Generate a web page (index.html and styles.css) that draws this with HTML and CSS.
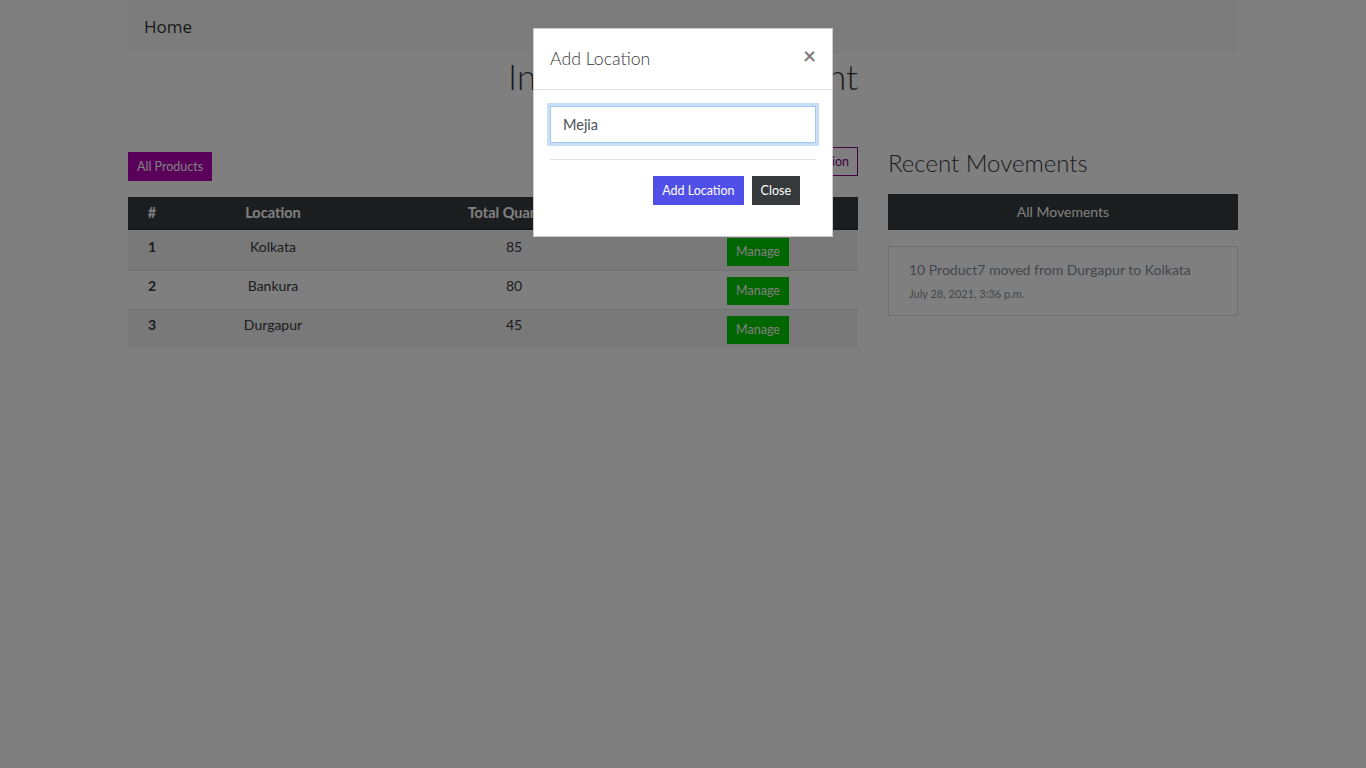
FILE: index.html
```html
<!DOCTYPE html>
<html lang="en">
<head>
<meta charset="utf-8">
<title>Inventory Management</title>
<link rel="stylesheet" href="styles.css">
</head>
<body>
<div class="page">
  <nav class="navbar"><a class="brand" href="#">Home</a></nav>
  <h1 class="title">Inventory Management</h1>
  <div class="row">
    <div class="col-main">
      <div class="actions">
        <a class="btn btn-sm btn-purple btn-low" href="#">All Products</a>
        <a class="btn btn-sm btn-outline-purple" href="#">Add Location</a>
      </div>
      <table class="table">
        <colgroup>
          <col class="c1"><col class="c2"><col class="c3"><col class="c4">
        </colgroup>
        <thead>
          <tr><th>#</th><th>Location</th><th>Total Quantity</th><th>Action</th></tr>
        </thead>
        <tbody>
          <tr class="odd"><th>1</th><td>Kolkata</td><td>85</td><td><a class="btn btn-sm btn-green" href="#">Manage</a></td></tr>
          <tr><th>2</th><td>Bankura</td><td>80</td><td><a class="btn btn-sm btn-green" href="#">Manage</a></td></tr>
          <tr class="odd"><th>3</th><td>Durgapur</td><td>45</td><td><a class="btn btn-sm btn-green" href="#">Manage</a></td></tr>
        </tbody>
      </table>
    </div>
    <div class="col-side">
      <h3 class="side-title">Recent Movements</h3>
      <a class="btn btn-dark btn-block" href="#">All Movements</a>
      <ul class="list">
        <li class="list-item">
          <div class="move-text">10 Product7 moved from Durgapur to Kolkata</div>
          <small class="move-date">July 28, 2021, 3:36 p.m.</small>
        </li>
      </ul>
    </div>
  </div>
</div>
<div class="backdrop"></div>
<div class="modal">
  <div class="modal-dialog">
    <div class="modal-header">
      <h5 class="modal-title">Add Location</h5>
      <span class="close">&times;</span>
    </div>
    <div class="modal-body">
      <div class="form-group">
        <input class="form-control" type="text" value="Mejia">
      </div>
      <div class="modal-footer">
        <button class="btn btn-sm btn-indigo" type="button">Add Location</button>
        <button class="btn btn-sm btn-dark" type="button">Close</button>
      </div>
    </div>
  </div>
</div>
</body>
</html>
```

FILE: styles.css
```css
* { box-sizing: border-box; }

html, body { margin: 0; padding: 0; }

body {
  font-family: Lato, "Liberation Sans", sans-serif;
  font-size: 14px;
  line-height: 22.5px;
  color: #373a3c;
  background: #fff;
  height: 768px;
  overflow: hidden;
}

.page {
  width: 1110px;
  margin: 0 auto;
}

.navbar {
  height: 53px;
  background: #f8f9fa;
  display: flex;
  align-items: center;
  padding: 0 16px;
}

.brand {
  font-family: "Open Sans", sans-serif;
  font-size: 17px;
  color: #333;
  text-decoration: none;
  line-height: 1;
  margin-top: -1px;
}

.title {
  margin: 1px 0 48px;
  font-size: 35px;
  font-weight: 300;
  line-height: 45px;
  text-align: center;
  color: #373a3c;
}

.row {
  display: flex;
  gap: 30px;
}

.col-main { width: 730px; }
.col-side { width: 350px; }

.actions {
  display: flex;
  justify-content: space-between;
  align-items: flex-start;
  margin-bottom: 16px;
}

.btn {
  display: inline-block;
  border: 1px solid transparent;
  font-family: inherit;
  text-decoration: none;
  text-align: center;
  color: #fff;
  cursor: pointer;
  border-radius: 0;
}

.btn-sm {
  font-size: 12.5px;
  line-height: 19px;
  padding: 4px 8px;
}

.btn-low { margin-top: 5px; }

.btn-purple { background: #b400b4; border-color: #b400b4; }

.btn-outline-purple {
  background: transparent;
  color: #8a008a;
  border-color: #8a008a;
}

.btn-green { background: #00cc00; border-color: #00cc00; }

.btn-dark { background: #373a3c; border-color: #373a3c; }

.btn-indigo { background: #5050e8; border-color: #5050e8; }

.btn-block {
  display: block;
  width: 100%;
  padding: 6px 12px;
  font-size: 14px;
  line-height: 22px;
}

.table {
  width: 730px;
  border-collapse: collapse;
  table-layout: fixed;
}

.c1 { width: 48px; }
.c2 { width: 194px; }
.c3 { width: 288px; }
.c4 { width: 200px; }

.table th, .table td {
  padding: 4.5px 4.5px 4px;
  text-align: center;
  vertical-align: top;
  line-height: 22.5px;
}

.table thead th {
  padding: 5px 4.5px 3.5px;
  background: #373a3c;
  color: #fff;
  font-weight: 700;
  font-size: 14.5px;
  border-bottom: 2px solid #2d3032;
}

.table tbody tr { border-top: 1px solid #dee2e6; }
.table tbody tr:first-child { border-top: 0; }
.table tbody tr:first-child th,
.table tbody tr:first-child td { padding-top: 6px; }
.table tbody tr.odd { background: rgba(0, 0, 0, 0.05); }
.table tbody th { font-weight: 700; }
.table td .btn {
  margin-top: 1.5px;
  line-height: 18px;
}

.side-title {
  margin: 0 0 15px;
  font-size: 24px;
  font-weight: 300;
  line-height: 32px;
}

.list {
  list-style: none;
  margin: 16px 0 0;
  padding: 0;
}

.list-item {
  border: 1px solid rgba(0, 0, 0, 0.125);
  padding: 12px 20px 12px;
}

.move-text { color: #868e96; line-height: 22.5px; }

.move-date {
  display: block;
  margin-top: 3px;
  font-size: 11px;
  line-height: 18px;
  color: #868e96;
}

.backdrop {
  position: fixed;
  inset: 0;
  background: rgba(0, 0, 0, 0.5);
}

.modal {
  position: fixed;
  inset: 0;
  display: flex;
  justify-content: center;
  align-items: flex-start;
  padding-top: 28px;
}

.modal-dialog {
  width: 300px;
  background: #fff;
  border: 1px solid rgba(0, 0, 0, 0.2);
}

.modal-header {
  display: flex;
  justify-content: space-between;
  align-items: flex-start;
  padding: 16px;
  border-bottom: 1px solid #dee2e6;
}

.modal-title {
  margin: 0;
  font-size: 17.7px;
  font-weight: 300;
  line-height: 28px;
  color: #373a3c;
}

.close {
  font-size: 22.5px;
  font-weight: 700;
  line-height: 1;
  color: #000;
  opacity: 0.5;
  margin-top: 0;
  margin-right: 0;
}

.modal-body { padding: 16px; }

.form-group { margin-bottom: 16px; }

.form-control {
  display: block;
  width: 100%;
  height: 37px;
  padding: 6px 12px;
  font-family: inherit;
  font-size: 14.5px;
  color: #495057;
  border: 1px solid #a1c8f3;
  border-radius: 0;
  box-shadow: 0 0 0 3px rgba(39, 128, 227, 0.25);
  outline: none;
}

.modal-footer {
  display: flex;
  justify-content: flex-end;
  gap: 8px;
  border-top: 1px solid #dee2e6;
  padding: 16px 16px 15px;
}
```
